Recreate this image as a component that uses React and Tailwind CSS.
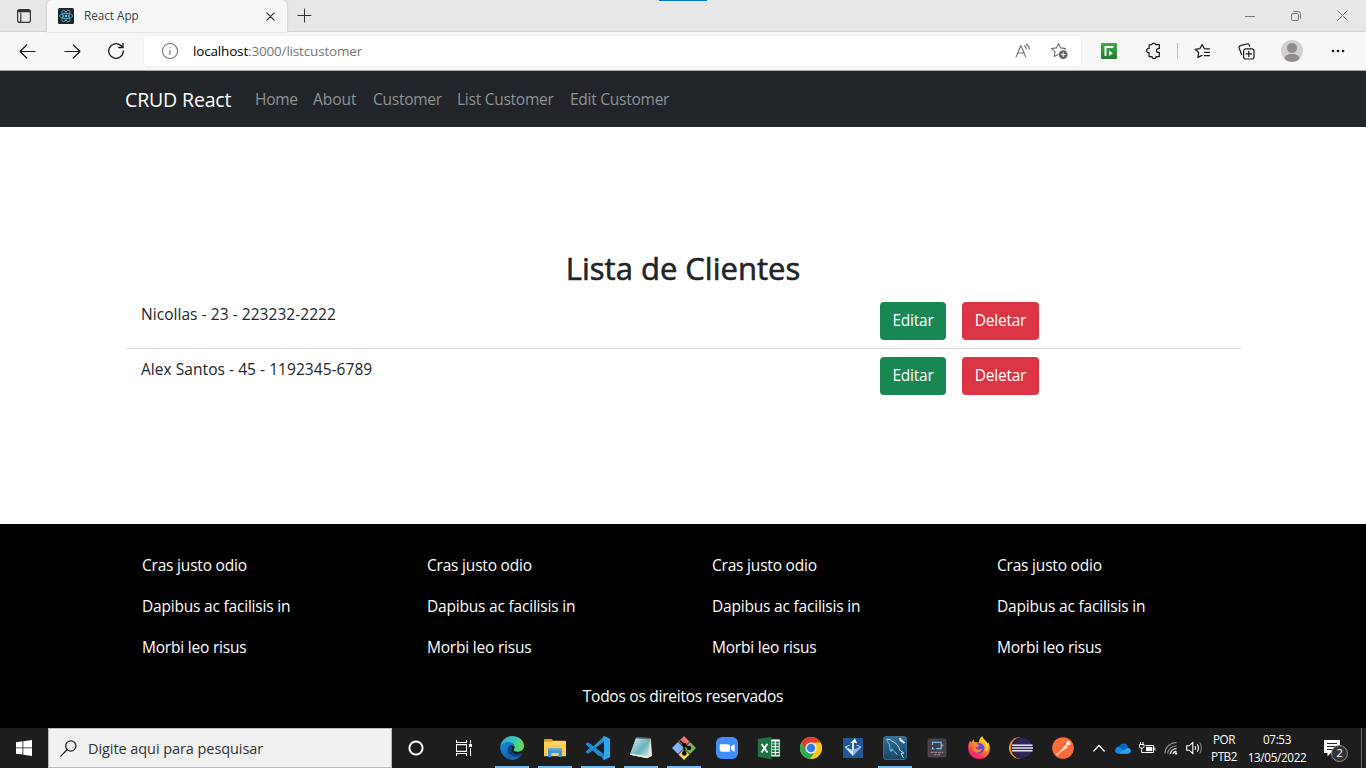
import React from "react";

const ui = "font-['Open_Sans','Noto_Sans',sans-serif]";

function Stroke({ w, h, sw = 1, color = "#1b1b1b", children, className = "" }) {
  return (
    <svg width={w} height={h} viewBox={`0 0 ${w} ${h}`} fill="none" stroke={color} strokeWidth={sw} strokeLinecap="round" strokeLinejoin="round" className={`block shrink-0 ${className}`}>
      {children}
    </svg>
  );
}

function TabBar() {
  return (
    <div className="relative flex h-8 shrink-0 border-b border-[#d4d4d4] bg-[#e7e7e7]">
      <div className="flex w-[47px] justify-center pt-[9px]">
        <Stroke w={14} h={14} sw={1.2} color="#333">
          <rect x="0.6" y="0.6" width="12.8" height="12.8" rx="2.2" />
          <path d="M1 2.7h12M1 1.7h12M3.8 4v9" />
        </Stroke>
      </div>
      <div className="z-10 flex h-8 w-60 items-center rounded-t-[5px] bg-[#f7f7f7] pl-[11px] shadow-[0_0_2px_rgba(0,0,0,0.25)]">
        <svg width="16" height="16" viewBox="0 0 16 16" className="block">
          <rect width="16" height="16" rx="1.5" fill="#20232a" />
          <g fill="none" stroke="#61dafb" strokeWidth="0.75" opacity="0.85">
            <ellipse cx="8" cy="8" rx="6.6" ry="2.6" />
            <ellipse cx="8" cy="8" rx="6.6" ry="2.6" transform="rotate(60 8 8)" />
            <ellipse cx="8" cy="8" rx="6.6" ry="2.6" transform="rotate(120 8 8)" />
          </g>
          <circle cx="8" cy="8" r="1.2" fill="#61dafb" />
        </svg>
        <span className="ml-[10px] flex-1 text-[11.7px] text-[#404040]">React App</span>
        <Stroke w={9} h={9} sw={1.2} color="#333" className="mr-[12px]">
          <path d="M.8.8l7.4 7.4M8.2.8L.8 8.2" />
        </Stroke>
      </div>
      <div className="pl-[10px] pt-[8px]">
        <Stroke w={15} h={15} color="#333">
          <path d="M7.5 1v13M1 7.5h13" />
        </Stroke>
      </div>
      <div className="absolute left-[659px] top-0 h-px w-[48px] bg-[#0078d4]" />
      <div className="ml-auto flex items-center pr-[18px]">
        <Stroke w={10} h={10} color="#777"><path d="M0 5.5h10" /></Stroke>
        <Stroke w={10} h={10} color="#777" className="ml-[36px]">
          <rect x=".5" y="2.5" width="7" height="7" rx="1.2" />
          <path d="M2.7.5h4.6a2.2 2.2 0 0 1 2.2 2.2v4.6" />
        </Stroke>
        <Stroke w={11} h={11} color="#777" className="ml-[36px]"><path d="M.7.7l9.6 9.6M10.3.7L.7 10.3" /></Stroke>
      </div>
    </div>
  );
}

function Toolbar() {
  return (
    <div className="flex h-[39px] shrink-0 items-center border-b border-[#a8a8a8] bg-[#f7f7f7]">
      <Stroke w={17} h={15} sw={1.2} className="ml-[19px]"><path d="M16 7.5H1M7.7 1L1 7.5 7.7 14" /></Stroke>
      <Stroke w={17} h={15} sw={1.2} className="ml-[28px]"><path d="M1 7.5h15M9.3 1L16 7.5 9.3 14" /></Stroke>
      <Stroke w={18} h={18} sw={1.3} className="ml-[26px]">
        <path d="M16.3 9A7.3 7.3 0 1 1 13.8 3.5L16 5.4M16 1.3v4.2h-4.2" />
      </Stroke>
      <div className="ml-[19px] flex h-[30px] w-[937px] items-center rounded bg-white pl-[17px] shadow-[0_0_2px_rgba(0,0,0,0.1)]">
        <Stroke w={18} h={18} sw={1.1} color="#767676">
          <circle cx="9" cy="9" r="7.5" />
          <path d="M9 8.3v4.2M9 5.6v.2" />
        </Stroke>
        <span className="ml-[14px] flex-1 pt-px text-[13.5px] tracking-[-0.17px] text-[#767676]">
          <span className="text-black">localhost</span>:3000/listcustomer
        </span>
        <Stroke w={17} h={16} sw={1.1} color="#707070" className="mr-[18px]">
          <path d="M1 14L5.9 2.5 10.8 14M2.8 10h6.2M9.6 2.8c1.1.8 1.7 1.8 1.7 3.2M11.1.9c2 1.1 3.2 3 3.2 5.2" />
        </Stroke>
        <svg width="19" height="18" viewBox="0 0 19 18" className="mr-[12px] block">
          <path d="M8.5 1.5l2.1 4.4 5 .7-3.6 3.4.5 4-4-1.8-4.3 2.3.8-4.9L1.4 6.6l5-.7z" fill="none" stroke="#707070" strokeWidth="1.1" strokeLinejoin="round" />
          <circle cx="13.2" cy="12.6" r="5" fill="#fff" />
          <circle cx="13.2" cy="12.6" r="4.4" fill="#666" />
          <path d="M13.2 10.3v4.6M10.9 12.6h4.6" stroke="#fff" />
        </svg>
      </div>
      <svg width="16" height="16" viewBox="0 0 16 16" className="ml-[20px] block">
        <defs><linearGradient id="ext" x2="0" y2="1"><stop stopColor="#3eae49" /><stop offset="1" stopColor="#267a32" /></linearGradient></defs>
        <rect width="16" height="16" rx="1" fill="url(#ext)" />
        <path d="M4.5 13V4.1h7.8" fill="none" stroke="#fff" strokeWidth="2" />
        <path d="M8 7.4l3.8 2.9L8 13.1z" fill="#fff" />
      </svg>
      <Stroke w={17} h={18} sw={1.25} className="ml-[28px]">
        <path d="M5 2.7h1.8a2 2 0 0 1 3.9 0h3.6v3.8h-.9a1.9 1.9 0 0 0 0 3.9h.9v4.2h-3.1a2.1 2.1 0 0 1-4.2 0H4.1v-4a2.1 2.1 0 1 1 0-4.1V3.6q0-.9.9-.9z" />
      </Stroke>
      <div className="ml-[15px] h-4 w-px bg-[#c5c5c5]" />
      <Stroke w={17} h={17} sw={1.2} className="ml-[16px]">
        <path d="M10 5.1L8.1 1.4 6 5.6l-4.8.7 3.5 3.2-.9 4.9 4.2-2M10.5 5.9h5M10.5 9.3h5M10.5 12.7h5" />
      </Stroke>
      <Stroke w={17} h={17} sw={1.2} className="ml-[27px]">
        <rect x="5.6" y="5.8" width="10.4" height="10.2" rx="2.2" />
        <path d="M10.8 8.2v5.4M8.1 10.9h5.4M3.6 11.5L1.2 5.3C.8 4.1 1.3 3 2.4 2.6L8.8 1c1.2-.3 2.1.2 2.6 1.3l.4 1" />
      </Stroke>
      <svg width="22" height="22" viewBox="0 0 22 22" className="ml-[26px] block">
        <circle cx="11" cy="11" r="11" fill="#d2d0ce" />
        <circle cx="11" cy="8" r="5" fill="#918c89" />
        <path d="M3.5 19c0-3.4 3.2-5 7.5-5s7.5 1.6 7.5 5a11 11 0 0 1-15 0z" fill="#918c89" />
      </svg>
      <svg width="14" height="4" viewBox="0 0 14 4" className="ml-[28px] block" fill="#111">
        <circle cx="2" cy="2" r="1.3" /><circle cx="7" cy="2" r="1.3" /><circle cx="12" cy="2" r="1.3" />
      </svg>
    </div>
  );
}

function Navbar() {
  return (
    <nav className="flex h-14 shrink-0 items-center bg-[#212529] pl-[125px] pt-px text-[15.5px] tracking-[-0.25px] text-[#909294]">
      <a className="mr-4 w-[106px] whitespace-nowrap text-[19.5px] tracking-[-0.15px] text-white">CRUD React</a>
      <a className="w-[58px] pl-2">Home</a>
      <a className="w-[60px] pl-2 tracking-[0px]">About</a>
      <a className="w-[84px] pl-2">Customer</a>
      <a className="w-[113px] whitespace-nowrap pl-2">List Customer</a>
      <a className="whitespace-nowrap pl-2">Edit Customer</a>
    </nav>
  );
}

function CustomerRow({ text, last }) {
  return (
    <li className={`flex h-[55px] items-start pl-4 pt-2 ${last ? "" : "border-b border-[#dfdfdf]"}`}>
      <span className="w-[739px] text-[15.5px] leading-6 tracking-[0.05px]">{text}</span>
      <button className="h-[38px] w-[66px] rounded bg-[#198754] text-[15.5px] tracking-[-0.25px] text-white">Editar</button>
      <button className="ml-4 h-[38px] w-[77px] rounded bg-[#dc3545] text-[15.5px] tracking-[-0.25px] text-white">Deletar</button>
    </li>
  );
}

function Content() {
  return (
    <main className="flex h-[397px] shrink-0 flex-col bg-white px-[125px] pt-[123px] text-[#212529]">
      <h2 className="mb-2 text-center text-[31px] leading-[36px] [-webkit-text-stroke:0.6px_#212529]">Lista de Clientes</h2>
      <ul className="flex flex-col">
        <CustomerRow text="Nicollas - 23 - 223232-2222" />
        <CustomerRow text="Alex Santos - 45 - 1192345-6789" last />
      </ul>
    </main>
  );
}

function Footer() {
  return (
    <footer className="flex h-[204px] shrink-0 flex-col bg-black pt-[21px] text-[15.5px] tracking-[-0.2px] text-white">
      <div className="grid grid-cols-[repeat(4,285px)] pl-[142px]">
        {[0, 1, 2, 3].map((n) => (
          <ul key={n}>
            <li className="h-[41px] leading-[41px]">Cras justo odio</li>
            <li className="h-[41px] leading-[41px]">Dapibus ac facilisis in</li>
            <li className="h-[41px] leading-[41px]">Morbi leo risus</li>
          </ul>
        ))}
      </div>
      <p className="pt-4 text-center leading-6 tracking-[-0.25px]">Todos os direitos reservados</p>
    </footer>
  );
}

const Svg24 = ({ children }) => <svg width="24" height="24" viewBox="0 0 24 24" className="block">{children}</svg>;

const Edge = () => (
  <Svg24>
    <defs>
      <linearGradient id="eg1" x1="0" y1=".3" x2="1" y2=".5"><stop stopColor="#2aa7dc" /><stop offset=".55" stopColor="#35c9b8" /><stop offset="1" stopColor="#6ddb4b" /></linearGradient>
      <linearGradient id="eg2" x1="0" y1="0" x2=".8" y2="1"><stop stopColor="#1b8ede" /><stop offset="1" stopColor="#0c59a4" /></linearGradient>
    </defs>
    <path d="M.3 10.6C1 4.4 6 0 12 0c7 0 12 4.7 12 9.7 0 3.8-3 6-6.3 6-2.6 0-4-.8-4-1.7 0-.6.9-1 .9-2.7 0-2.5-2.7-4.7-6-4.7-4 0-7.4 1.8-8.3 4z" fill="url(#eg1)" />
    <path d="M.2 11.2C1 8 4.4 6.3 8.4 6.3c3.8 0 6.2 2.4 6.2 5-1-1.5-2.3-2-3.7-1.7C7.6 10.4 7 16 11 20c2 2 4 2.6 5 3A12 12 0 0 1 .2 11.2z" fill="url(#eg2)" />
    <path d="M10.6 9.7c-3.8 1.5-4 7.8.6 11.4 3.4 2.6 9-.5 11.4-3.6.4-.5-.2-.8-.6-.5-3.4 2-10 1.4-10.4-3.6-.1-1.7.6-2.8.7-3.8-.5-.2-1-.2-1.7.1z" fill="#103f80" />
    <path d="M11.2 21.1c-2-1.6-3-3.6-3.2-5.5 1.5 3.4 5.7 5.6 9.6 5 2.3-.4 3.8-1.7 5-3.1-2.4 4.1-6.4 6.5-10.6 6.5-1 0-1.8-.1-2.6-.3 1.2-.4 1.3-1.3 1.8-2.6z" fill="#1767b6" />
  </Svg24>
);
const Explorer = () => (
  <Svg24>
    <path d="M1 3.8q0-.8.8-.8h7l1.6 2H22v7H1z" fill="#e1a10b" />
    <path d="M1 5.7h8l1.3-1H22q1 0 1 1V20H1z" fill="#fdd462" />
    <path d="M1 9h22v11.2H1z" fill="#fcca51" />
    <path d="M5 13.2q0-.8.8-.8h12.4q.8 0 .8.8V21h-3.4v-4.1H8.4V21H5z" fill="#3c97da" />
    <path d="M5 14.6h14v-1.4q0-.8-.8-.8H5.8q-.8 0-.8.8z" fill="#53abe8" />
  </Svg24>
);
const VsCode = () => (
  <Svg24>
    <path d="M18.2 0L2 15.4 0 16.5l2 1.1 3.8-2.7L18 5.6z" fill="#2590d4" />
    <path d="M18.2 24L2 8.6 0 7.5l2-1.1 3.8 2.7L18 18.4z" fill="#1479bd" />
    <path d="M0 7.5v1.2l13 11.6 5-1.9L2 6.4zM0 16.5v-1.2L3.5 12l2.6 2.3L2 17.6z" fill="#1f8ad2" />
    <path d="M18 0l6 2.8v18.4L18 24l-1-1 1-4.6V5.6L17 1z" fill="#2aa8f2" />
  </Svg24>
);
const Notepad = () => (
  <Svg24>
    <defs><linearGradient id="np" x2="1" y2="1"><stop stopColor="#d8f1f4" /><stop offset=".55" stopColor="#69b3bd" /><stop offset="1" stopColor="#e3f3f3" /></linearGradient></defs>
    <path d="M7 2l15 .7.8 17.4-4.5 2.2L1 18.8z" fill="#c9b98b" />
    <path d="M7 2l14.3.5L18.4 22 1 18.5z" fill="url(#np)" />
    <path d="M7.5 1l14 1-.4 1.6L7 2.6z" fill="#62767b" />
    <path d="M21.3 3l1.8 16.8-4.7 2.3z" fill="#e7e6da" />
    <path d="M1.5 17.4l17.3 3-.5 1.8L1 18.8z" fill="#eee" />
  </Svg24>
);
const Git = () => (
  <Svg24>
    <path d="M12 0l5.5 5.5L12 11 6.5 5.5z" fill="#f37171" />
    <path d="M18 6l6 6-6 6-6-6z" fill="#79b55a" />
    <path d="M6 6l6 6-6 6-6-6z" fill="#82b2fa" />
    <path d="M12 13l5.5 5.5L12 24l-5.5-5.5z" fill="#fad86a" />
    <path d="M8.2 4.8l4.2 4.3v8.5M12.4 9.2l4.4 2.2" stroke="#111" strokeWidth="1.8" fill="none" />
    <g fill="#111"><circle cx="12.4" cy="9" r="2.3" /><circle cx="17" cy="12" r="2.3" /><circle cx="12.3" cy="17.4" r="2.4" /></g>
  </Svg24>
);
const Zoom = () => (
  <Svg24>
    <rect x="1" y="1" width="22" height="22" rx="6" fill="#428dfc" />
    <path d="M4.7 8.2h8q2.4 0 2.4 2.4v5.2h-8q-2.4 0-2.4-2.4zM16 10.6l3-2.1q.6-.4.6.3v6.6q0 .7-.6.3l-3-2.1z" fill="#fff" />
  </Svg24>
);
const Excel = () => (
  <Svg24>
    <path d="M12 3.2h11v17.5H12z" fill="#fff" />
    <path d="M22.9 3.2v17.5H12M12 3.2h11" fill="none" stroke="#207245" strokeWidth=".6" />
    <path d="M15 5.4h2.8v2H15zM15 8.3h2.8v2H15zM15 11.2h2.8v2H15zM15 14.1h2.8v2H15zM15 17h2.8v2H15zM18.8 5.4h3v2h-3zM18.8 8.3h3v2h-3zM18.8 11.2h3v2h-3zM18.8 14.1h3v2h-3zM18.8 17h3v2h-3z" fill="#207245" />
    <path d="M.8 3.1L14.4.8v22.4L.8 20.8z" fill="#207245" />
    <path d="M4.6 8l5.8 8.4M10.4 7.8l-5.9 8.7" stroke="#fff" strokeWidth="1.8" />
  </Svg24>
);
const Chrome = () => (
  <Svg24>
    <circle cx="12" cy="12" r="11" fill="#fbc916" />
    <path d="M2.5 6.5A11 11 0 0 1 21.5 6.5L12 7 7.2 14.7z" fill="#e33b2e" />
    <path d="M2.5 6.5l4.8 8.2q1.7 2.6 4.7 2.6l4-1.3-4.8 7A11 11 0 0 1 2.5 6.5z" fill="#2da94f" />
    <path d="M12 6.8h9.6A11 11 0 0 1 11.4 23l5-8.3z" fill="#fbc916" />
    <circle cx="12" cy="12" r="5.5" fill="#fff" /><circle cx="12" cy="12" r="4.3" fill="#347be8" />
  </Svg24>
);
const BlueBox = () => (
  <Svg24>
    <rect x="2" y="2" width="20" height="20" fill="#225795" />
    <path d="M4 11.5l8 3.6V20z" fill="#dcecf8" />
    <path d="M20 11.5l-8 3.6V20z" fill="#8dbbe0" />
    <path d="M4 11l5-1.9M20 11l-4.5-1.9M4 11l8 3.6 8-3.6" fill="none" stroke="#c4dcf0" strokeWidth=".9" />
    <path d="M12 14V6.2" stroke="#fff" strokeWidth="1.7" />
    <path d="M9.2 7.2L14 2.6l2.2 4.8-3-.9z" fill="#fff" />
  </Svg24>
);
const Workbench = () => (
  <Svg24>
    <defs><linearGradient id="wb" x2="0" y2="1"><stop stopColor="#316f9b" /><stop offset="1" stopColor="#174563" /></linearGradient></defs>
    <rect x=".5" y=".5" width="23" height="23" rx="2.5" fill="url(#wb)" stroke="#4180a7" strokeWidth=".7" />
    <path d="M3.5 3.5c1.8-.6 3.5-.2 5 1.4 4.2 1.4 7.2 4.8 8.4 9.4l4 2.7-2.9.4 2.5 4.4" fill="none" stroke="#c4e1ec" strokeWidth="1" />
    <path d="M3.5 3.5c1 1.3 1.2 3.2 2.7 4.6 1 2-.2 4.7 1.9 7.5l1-2.8c1.2 2.2 2.2 3.3 4 4.3l1.2 2" fill="none" stroke="#9dc3d4" strokeWidth=".9" />
    <path d="M17 2l.6 2.4 2 .1M18.3 4.6l3.2 2.4" fill="none" stroke="#fff" strokeWidth="1.7" />
  </Svg24>
);
const Chip = () => (
  <Svg24>
    <rect x="3" y="3" width="18" height="18" rx="1.5" fill="#483e49" stroke="#62555f" strokeWidth=".6" />
    <path d="M7.5 9V6.3h8.7v6.4h-5M9.5 13h-2v-2" stroke="#77bde2" strokeWidth="1.2" fill="none" />
    <path d="M16 9.5h2.3" stroke="#77bde2" strokeWidth="1.4" />
    <path d="M5.7 16.3h12.6" stroke="#b6a9b7" strokeWidth=".9" strokeDasharray="3 .7" />
    <path d="M9 18.7h2.3M12.3 18.7h3" stroke="#b6a9b7" strokeWidth=".8" />
  </Svg24>
);
const Firefox = () => (
  <Svg24>
    <defs><linearGradient id="ff" x1=".8" x2=".2" y2="1"><stop stopColor="#ffe535" /><stop offset=".4" stopColor="#ff9b28" /><stop offset=".72" stopColor="#ff3b50" /><stop offset="1" stopColor="#e31986" /></linearGradient></defs>
    <path d="M2.8 4.5l1.3 2 2.5-3.2.9 2.7 4.4.4c.1-3 1.7-5 3.3-6.4.8 3.3 3.5 3.8 5.2 7.3l1-.8c3.7 7.1.3 16.4-9.1 16.5C4 23 .4 16.4 1.3 9.4z" fill="url(#ff)" />
    <circle cx="12" cy="12.3" r="5.4" fill="#7044cd" />
    <path d="M4.8 8.1c2.9-1.5 5.8.1 7.5 1.1-.8 1.7-3.3 1.2-3.6 2.8 1.4 2 4.8 2.2 6.5.6-1 4.9-7.8 5.2-9.3.8z" fill="#ff872e" />
    <path d="M15.4 4c1 2 2.6 3.5 3.2 5.5.8 3-.4 5-1.5 6.1 4.2-1.6 4.7-5.3 3.4-8.3-1.2-2.1-3.9-3.3-5.1-3.3z" fill="#ffd43b" />
  </Svg24>
);
const Eclipse = () => (
  <Svg24>
    <circle cx="11" cy="12" r="11" fill="#f7941e" />
    <circle cx="13" cy="12" r="11" fill="#171520" />
    <circle cx="13.3" cy="12" r="10.2" fill="#302557" />
    <path d="M3 9.3h20.6M3 12h21M3 14.7h20.6" stroke="#e9e9f3" strokeWidth="1.5" />
  </Svg24>
);
const Postman = () => (
  <Svg24>
    <circle cx="12" cy="12" r="10.8" fill="#ff6c37" />
    <path d="M6 18.5l8.2-8.4 2.2 1.2-6.2 4.4z" fill="#fff" />
    <path d="M12 11.4l3.2-3 1.7 1.9-3.9 3.3z" fill="#ffe2d7" />
    <circle cx="17.3" cy="7.2" r="2.1" fill="#fff" />
    <path d="M5.2 18.7l3-1.2" stroke="#fff" />
  </Svg24>
);

const apps = [
  { Icon: Edge, open: true }, { Icon: Explorer, open: true }, { Icon: VsCode, open: true },
  { Icon: Notepad, open: true }, { Icon: Git, open: true }, { Icon: Zoom },
  { Icon: Excel, narrow: true }, { Icon: Chrome, narrow: true }, { Icon: BlueBox, narrow: true },
  { Icon: Workbench, narrow: true, open: true }, { Icon: Chip, narrow: true },
  { Icon: Firefox, narrow: true }, { Icon: Eclipse, narrow: true }, { Icon: Postman, narrow: true },
];

function Taskbar() {
  return (
    <div className="flex h-10 shrink-0 bg-[#1d1d1d] text-white">
      <div className="flex w-12 items-center justify-center">
        <svg width="16" height="16" viewBox="0 0 16 16" fill="#fff"><path d="M0 2.2L6.5 1.3v6.2H0zM7.3 1.2L16 0v7.5H7.3zM0 8.3h6.5v6.3L0 13.7zM7.3 8.3H16V16l-8.7-1.3z" /></svg>
      </div>
      <div className="flex w-[344px] items-center border border-[#b9b9b9] bg-[#f1f1f1] pl-[11px] text-[14.5px] tracking-[-0.07px] text-[#333]">
        <Stroke w={17} h={17} sw={1.3} color="#222"><circle cx="10.8" cy="6" r="5.1" /><path d="M7.1 9.8L.8 16.1" /></Stroke>
        <span className="ml-[11px] pt-px">Digite aqui para pesquisar</span>
      </div>
      <div className="flex w-12 items-center justify-center">
        <svg width="16" height="16" viewBox="0 0 16 16"><circle cx="8" cy="8" r="6.6" fill="none" stroke="#fff" strokeWidth="2" /></svg>
      </div>
      <div className="mr-[2px] flex w-12 items-center justify-center">
        <svg width="16" height="16" viewBox="0 0 16 16" fill="none" stroke="#fff" strokeWidth="1.1"><path d="M.5 0v2.5h10V0M.5 16v-2.5h10V16M.5 4.6h10v6.8H.5zM14.5 0v3.5M14.5 8v8" /><path d="M13 4h3v3h-3z" fill="#fff" stroke="none" /></svg>
      </div>
      {apps.map(({ Icon, open, narrow }, i) => (
        <div key={i} className={`flex shrink-0 flex-col items-center ${narrow ? "w-[42px]" : "w-[43px]"}`}>
          <div className="flex h-[38px] items-center pt-[2px]"><Icon /></div>
          {open && <div className="h-[2px] w-[34px] bg-[#76b9ed]" />}
        </div>
      ))}
      <div className="flex flex-1 items-center">
        <Stroke w={12} h={8} sw={1.3} color="#fff" className="ml-[9px]"><path d="M.8 7L6 1.5 11.2 7" /></Stroke>
        <svg width="17" height="11" viewBox="0 0 17 11" className="ml-[10px] block">
          <path d="M1.5 5.2A3.3 3.3 0 0 1 4.5 3.1 4.5 4.5 0 0 1 12.6 3q.8 1 .8 2.2L9 8z" fill="#0868bd" />
          <path d="M3.5 10.7A3.3 3.3 0 1 1 4.8 4.5l8.5 5.4z" fill="#1586dc" />
          <path d="M3.5 10.7l8-5.2a3.4 3.4 0 0 1 2.1-.5 2.9 2.9 0 0 1 0 5.7z" fill="#28a8ea" />
        </svg>
        <svg width="17" height="13" viewBox="0 0 17 13" fill="none" stroke="#fff" strokeWidth="1" className="ml-[7px] block">
          <path d="M6.5 3.5h8v7h-9M15.8 5.5v3M.5 2.5H5v2q0 1.5-1.3 1.5H1.8Q.5 6 .5 4.5zM1.5 0v2.5M4 0v2.5M2.7 6v4.5h3" />
          <path d="M7 4.9h6.3v4.2H7z" fill="#fff" stroke="none" />
        </svg>
        <svg width="14" height="14" viewBox="0 0 14 14" fill="none" className="ml-[8px] block">
          <path d="M.7 12.5A12 12 0 0 1 12.5 1.5M3.6 12.8A9 9 0 0 1 12.5 4.7" stroke="#9b9b9b" strokeWidth="1.1" />
          <path d="M6.3 12.9a6.2 6.2 0 0 1 6.2-5.2M9 13a3.5 3.5 0 0 1 3.5-2.7" stroke="#fff" strokeWidth="1.2" /><circle cx="12" cy="12.4" r="1.2" fill="#fff" />
        </svg>
        <svg width="17" height="14" viewBox="0 0 17 14" fill="none" stroke="#fff" strokeWidth="1.1" className="ml-[8px] block">
          <path d="M.7 4.8h2.5L6.8 1.5v11L3.2 9.2H.7zM9 5q1.2 2 0 4M11.3 3.3q2.3 3.7 0 7.4" /><path d="M13.7 1.5q3.3 5.5 0 11" stroke="#888" />
        </svg>
        <div className="ml-[7px] flex w-[28px] flex-col items-center text-[11.7px] leading-[17px] tracking-[-0.45px]"><span>POR</span><span>PTB2</span></div>
        <div className="ml-[8px] flex w-[62px] flex-col items-center pb-px text-[11.7px] leading-[18px] tracking-[-0.33px]"><span>07:53</span><span>13/05/2022</span></div>
        <div className="relative ml-[16px] mt-[1px] h-[26px] w-[26px]">
          <svg width="17" height="17" viewBox="0 0 17 17" className="mt-[4px] block"><path d="M0 0h16v13H7l-3.5 3.2V13H0z" fill="#fff" /><path d="M3 3.5h10M3 6.5h10M3 9.5h6" stroke="#222" /></svg>
          <span className="absolute left-[7px] top-[9px] flex h-[17px] w-[17px] items-center justify-center rounded-full border border-[#929292] bg-[#333] text-[11.5px] leading-none">2</span>
        </div>
        <div className="ml-auto mr-[4px] h-full w-px bg-[#6b6b6b]" />
      </div>
    </div>
  );
}

export default function App() {
  return (
    <div className={`flex h-[768px] w-[1366px] flex-col overflow-hidden ${ui}`}>
      <TabBar />
      <Toolbar />
      <Navbar />
      <Content />
      <Footer />
      <Taskbar />
    </div>
  );
}
